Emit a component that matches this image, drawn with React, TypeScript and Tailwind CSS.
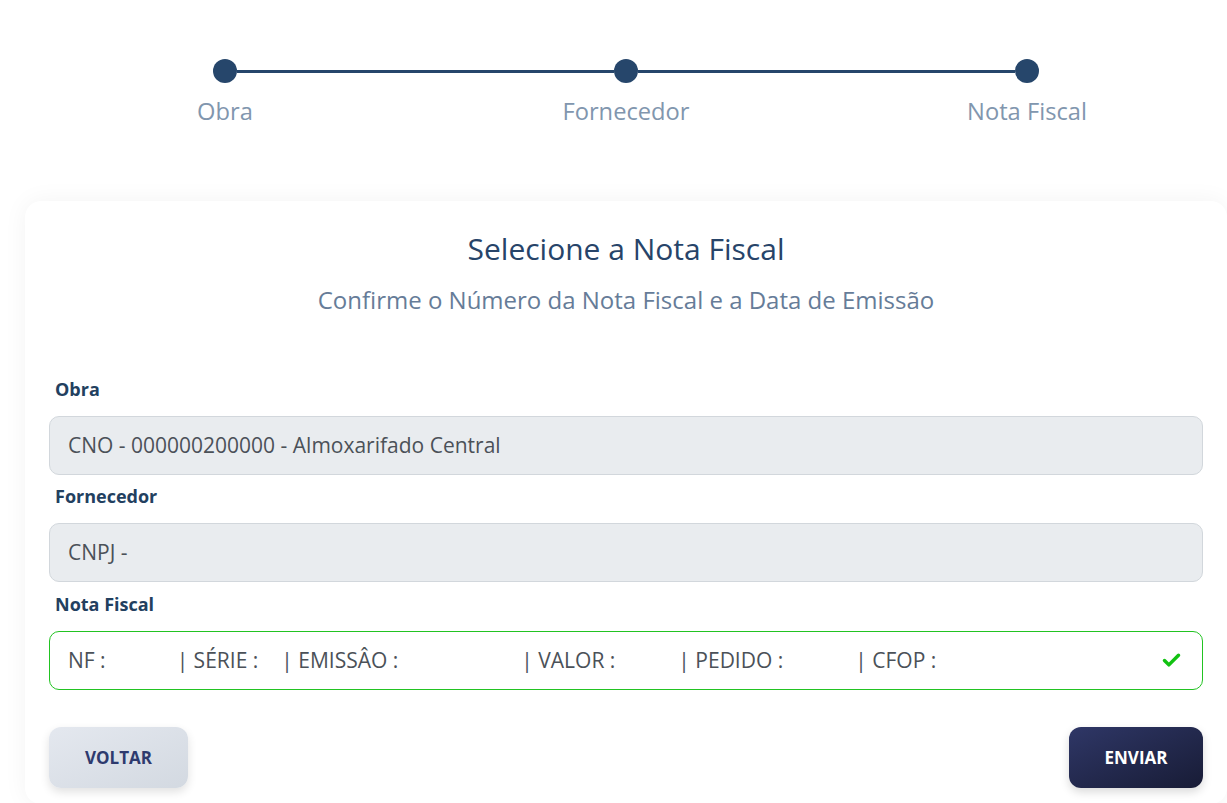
import React from 'react';
import { Check } from 'lucide-react';

const steps = ['Obra', 'Fornecedor', 'Nota Fiscal'];

const Stepper: React.FC = () => {
  return (
    <div className="pt-[59px] pl-[25px]">
      <div className="flex items-center px-[188px]">
        <div className="h-6 w-6 rounded-full bg-[#26466b] shrink-0"></div>
        <div className="h-[3px] flex-1 bg-[#26466b]"></div>
        <div className="h-6 w-6 rounded-full bg-[#26466b] shrink-0"></div>
        <div className="h-[3px] flex-1 bg-[#26466b]"></div>
        <div className="h-6 w-6 rounded-full bg-[#26466b] shrink-0"></div>
      </div>
      <div className="flex justify-between px-[100px] mt-[12px]">
        {steps.map((s) => (
          <div key={s} className="w-[200px] text-center text-[23.7px] leading-[32px] text-[#8196ae]">
            {s}
          </div>
        ))}
      </div>
    </div>
  );
};

const Field: React.FC<{ label: string; children: React.ReactNode; ok?: boolean; extra?: string }> = ({ label, children, ok, extra }) => (
  <div className={extra}>
    <div className="text-[18px] leading-6 font-bold text-[#22405f] pl-1.5">{label}</div>
    <div
      className={
        ok
          ? 'mt-[15px] h-[59px] rounded-[10px] border border-[#22c322] bg-white flex items-center px-[18px] text-[21px] text-[#4b5158]'
          : 'mt-[15px] h-[59px] rounded-[10px] border border-[#d2d7dc] bg-[#e9ecef] flex items-center px-[18px] text-[21px] text-[#4b5158]'
      }
    >
      {children}
    </div>
  </div>
);

const Gap: React.FC<{ w: string }> = ({ w }) => <span className={`inline-block ${w}`}></span>;

export default function App() {
  return (
    <div className="min-h-screen bg-white overflow-hidden" style={{ fontFamily: '"Open Sans", "Noto Sans", sans-serif' }}>
      <Stepper />
      <div className="pl-[25px] mt-[74px]">
        <div className="rounded-2xl bg-white shadow-[0_0_24px_rgba(0,0,0,0.05)] px-6 pt-[29px] pb-4 min-h-[603px]">
          <h1 className="text-center text-[30px] leading-[38px] text-[#274469]">Selecione a Nota Fiscal</h1>
          <p className="text-center text-[24px] leading-[32px] text-[#667c98] mt-[16px]">
            Confirme o Número da Nota Fiscal e a Data de Emissão
          </p>

          <div className="mt-[61px] flex flex-col gap-[9px]">
            <Field label="Obra">CNO - 000000200000 - Almoxarifado Central</Field>
            <Field label="Fornecedor">CNPJ -</Field>
            <Field label="Nota Fiscal" ok extra="mt-px">
              <div className="flex-1 whitespace-pre">
                <span>NF :</span>
                <Gap w="w-[71px]" />
                <span>| SÉRIE :</span>
                <Gap w="w-[23px]" />
                <span>| EMISSÂO :</span>
                <Gap w="w-[123px]" />
                <span>| VALOR :</span>
                <Gap w="w-[63px]" />
                <span>| PEDIDO :</span>
                <Gap w="w-[72px]" />
                <span>| CFOP :</span>
              </div>
              <Check className="w-[21px] h-[21px] text-[#12c212] mr-[2px]" strokeWidth={4} />
            </Field>
          </div>

          <div className="mt-[37px] flex justify-between">
            <button className="h-[61px] w-[139px] rounded-xl bg-gradient-to-br from-[#e4e8ef] to-[#d3d9e1] shadow-[0_4px_10px_rgba(0,0,0,0.12)] text-[17px] font-bold text-[#2e3a6e]">
              VOLTAR
            </button>
            <button className="h-[61px] w-[134px] rounded-xl bg-gradient-to-br from-[#2f3767] to-[#181c36] shadow-[0_4px_10px_rgba(0,0,0,0.15)] text-[17px] font-bold text-white">
              ENVIAR
            </button>
          </div>
        </div>
      </div>
    </div>
  );
}
